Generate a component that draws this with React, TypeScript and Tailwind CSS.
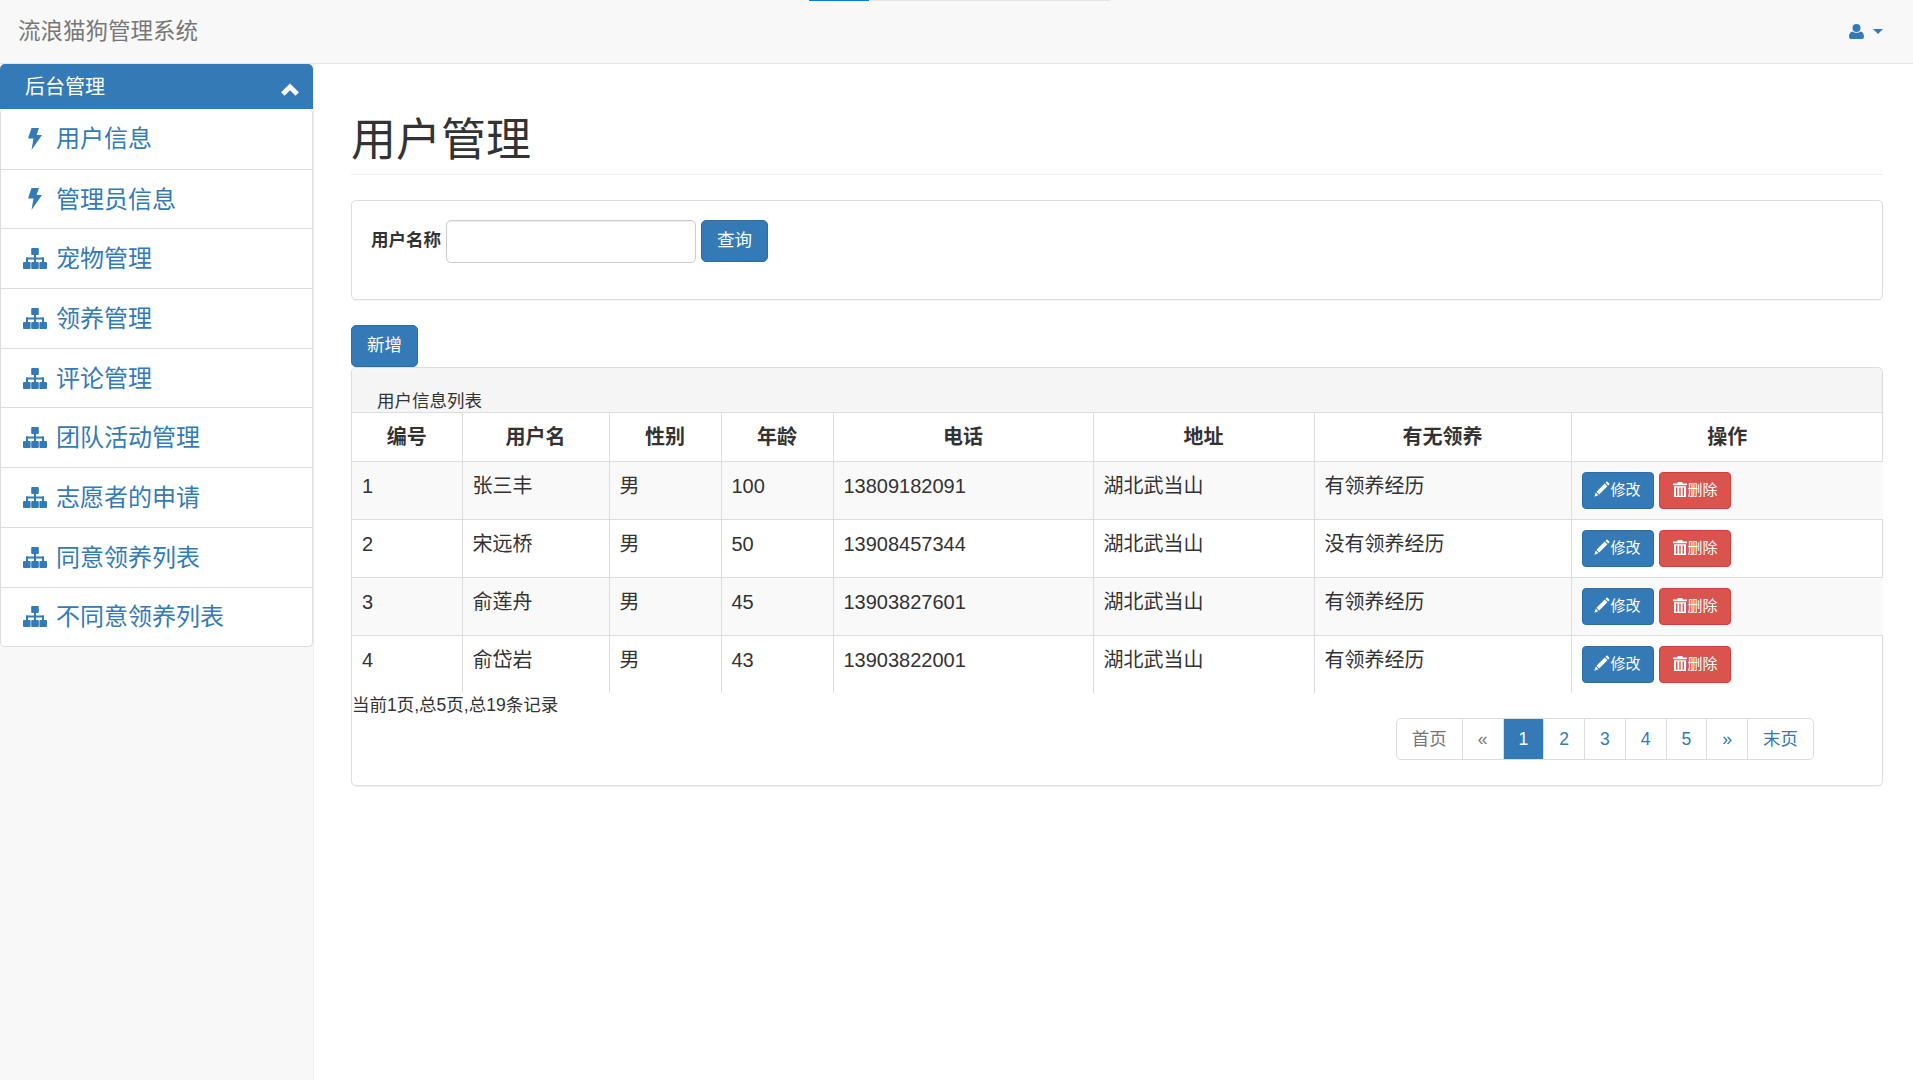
const menu = [
  { label: '用户信息', bolt: true },
  { label: '管理员信息', bolt: true },
  { label: '宠物管理' },
  { label: '领养管理' },
  { label: '评论管理' },
  { label: '团队活动管理' },
  { label: '志愿者的申请' },
  { label: '同意领养列表' },
  { label: '不同意领养列表' },
];

const rows = [
  ['1', '张三丰', '男', '100', '13809182091', '湖北武当山', '有领养经历'],
  ['2', '宋远桥', '男', '50', '13908457344', '湖北武当山', '没有领养经历'],
  ['3', '俞莲舟', '男', '45', '13903827601', '湖北武当山', '有领养经历'],
  ['4', '俞岱岩', '男', '43', '13903822001', '湖北武当山', '有领养经历'],
];

const headers = ['编号', '用户名', '性别', '年龄', '电话', '地址', '有无领养', '操作'];
const colWidths = [110, 147, 112, 112, 260, 221, 257, 312];
const pages = ['首页', '«', '1', '2', '3', '4', '5', '»', '末页'];

function BoltIcon() {
  return (
    <svg width="14" height="22" viewBox="0 0 14 22" fill="currentColor">
      <path d="M3.500 0H11L8.500 7H14L3.500 22L5.500 10.500H0Z" />
    </svg>
  );
}

function SitemapIcon() {
  return (
    <svg width="24" height="21" viewBox="0 0 24 21" fill="currentColor">
      <rect x="8.200" y="0" width="7.600" height="7" rx="1" />
      <rect x="11" y="6" width="2" height="8" />
      <rect x="3" y="9.500" width="18" height="2" rx="0.500" />
      <rect x="3" y="9.500" width="2" height="5" />
      <rect x="19" y="9.500" width="2" height="5" />
      <rect x="0" y="14" width="7.600" height="7" rx="1" />
      <rect x="8.200" y="14" width="7.600" height="7" rx="1" />
      <rect x="16.400" y="14" width="7.600" height="7" rx="1" />
    </svg>
  );
}

function ChevronUpIcon() {
  return (
    <svg width="18" height="13" viewBox="0 0 18 13" fill="none" stroke="currentColor" strokeWidth="4.800">
      <path d="M1.800 11L9 3.800L16.200 11" />
    </svg>
  );
}

function UserIcon() {
  return (
    <svg width="15" height="15" viewBox="0 0 15 15" fill="currentColor">
      <circle cx="7.500" cy="4" r="4" />
      <path d="M0 12.800C0 9.500 1.500 8 3.600 7.600C5 9.300 10 9.300 11.400 7.600C13.500 8 15 9.500 15 12.800C15 14.200 14 15 12.800 15H2.200C1 15 0 14.200 0 12.800Z" />
    </svg>
  );
}

function PencilIcon() {
  return (
    <svg width="16" height="16" viewBox="0 0 16 16" fill="currentColor" className="mb-[2px] shrink-0">
      <path d="M13 0.300 15.700 3 14.200 4.500 11.500 1.800ZM10.700 2.600 13.400 5.300 5.200 13.500 2.500 10.800ZM1.800 11.600 4.400 14.200 0.300 15.700Z" />
    </svg>
  );
}

function TrashIcon() {
  return (
    <svg width="14" height="15" viewBox="0 0 14 15" fill="currentColor" className="mb-[2px] ml-[2px] shrink-0">
      <path fillRule="evenodd" d="M4.500 0h5v1.500H14v1.800H0V1.500H4.500ZM1 4.200h12V15H1ZM3 5.500V13.800H4.400V5.500ZM6.300 5.500V13.800H7.700V5.500ZM9.600 5.500V13.800H11V5.500Z" />
    </svg>
  );
}

export default function App() {
  return (
    <div className="min-h-[1080px] bg-white text-[17.5px] leading-[25px] text-[#333] font-['Liberation_Sans','Noto_Sans_CJK_SC',sans-serif]">
      {/* Top nav */}
      <div className="relative flex h-[64px] items-center justify-between border-b border-[#e7e7e7] bg-[#f8f8f8] pl-[18px] pr-[30px]">
        <div className="absolute left-[809px] top-0 flex h-px w-[301px] bg-[#e5e5e5]">
          <div className="h-px w-[60px] bg-[#007ee5]" />
        </div>
        <span className="text-[22.5px] text-[#777]">流浪猫狗管理系统</span>
        <div className="flex items-center gap-[9px] text-[#337ab7]">
          <UserIcon />
          <span className="h-0 w-0 border-x-[5px] border-t-[5px] border-x-transparent border-t-[#337ab7]" />
        </div>
      </div>

      <div className="flex min-h-[1016px]">
        {/* Sidebar */}
        <div className="w-[314px] shrink-0 border-r border-[#eee] bg-[#f8f8f8]">
          <div className="flex h-[45px] items-center justify-between rounded-t-[5px] bg-[#337ab7] pl-[25px] pr-[14px] text-[20px] text-white">
            <span className="mt-[1px]">后台管理</span>
            <span className="mt-[6px]"><ChevronUpIcon /></span>
          </div>
          <div className="rounded-[5px] border border-[#ddd] border-t-0 bg-white">
            {menu.map((item, i) => (
              <div
                key={item.label}
                className={`flex h-[59.7px] items-center gap-[9px] pl-[22px] text-[24px] text-[#337ab7] ${i > 0 ? 'border-t border-[#ddd]' : ''}`}
              >
                <span className="flex w-[24px] justify-center">
                  {item.bolt ? <BoltIcon /> : <SitemapIcon />}
                </span>
                <span>{item.label}</span>
              </div>
            ))}
          </div>
        </div>

        {/* Main */}
        <div className="min-w-0 flex-1 pl-[37px] pr-[30px]">
          <div className="mt-[50px] border-b border-[#eee] pb-[6px]">
            <h1 className="text-[45px] leading-[54px] font-normal">用户管理</h1>
          </div>

          <div className="mt-[25px] h-[100px] rounded-[5px] border border-[#ddd] pl-[19px] pt-[19px] shadow-[0_1px_1px_rgba(0,0,0,0.05)]">
            <div className="flex items-start">
              <label className="mr-[5px] mt-[8px] font-bold">用户名称</label>
              <input className="h-[42.5px] w-[250px] rounded-[5px] border border-[#ccc] shadow-[inset_0_1px_1px_rgba(0,0,0,0.075)]" />
              <button className="ml-[5px] h-[42px] w-[67px] rounded-[5px] border border-[#2e6da4] bg-[#337ab7] pb-[2px] text-white">查询</button>
            </div>
          </div>

          <button className="mt-[25px] block h-[42px] w-[67px] rounded-[5px] border border-[#2e6da4] bg-[#337ab7] pb-[2px] text-white">新增</button>

          <div className="h-[419px] rounded-[5px] border border-[#ddd] shadow-[0_1px_1px_rgba(0,0,0,0.05)]">
            <div className="h-[45px] rounded-t-[5px] border-b border-[#ddd] bg-[#f5f5f5] pl-[25px] pt-[21px]">用户信息列表</div>
            <table className="w-full table-fixed border-collapse text-[20px] leading-[28px]">
              <colgroup>
                {colWidths.map((w, i) => (
                  <col key={i} style={{ width: w }} />
                ))}
              </colgroup>
              <thead>
                <tr className="h-[48px] border-b border-[#ddd]">
                  {headers.map((h, i) => (
                    <th key={h} className={`pt-[1px] text-center font-bold ${i > 0 ? 'border-l border-[#ddd]' : ''}`}>{h}</th>
                  ))}
                </tr>
              </thead>
              <tbody>
                {rows.map((row, r) => (
                  <tr key={row[0]} className={`h-[58px] ${r < 3 ? 'border-b border-[#ddd]' : ''} ${r % 2 === 0 ? 'bg-[#f9f9f9]' : ''}`}>
                    {row.map((cell, i) => (
                      <td key={i} className={`px-[10px] pb-[8px] align-middle ${i > 0 ? 'border-l border-[#ddd]' : ''}`}>{cell}</td>
                    ))}
                    <td className="border-l border-[#ddd] px-[10px] align-middle">
                      <div className="flex gap-[5px]">
                        <button className="flex h-[37px] w-[72px] items-center justify-center rounded-[4px] border border-[#2e6da4] bg-[#337ab7] text-[15px] text-white">
                          <PencilIcon />修改
                        </button>
                        <button className="flex h-[37px] w-[72px] items-center justify-center rounded-[4px] border border-[#d43f3a] bg-[#d9534f] text-[15px] text-white">
                          <TrashIcon />删除
                        </button>
                      </div>
                    </td>
                  </tr>
                ))}
              </tbody>
            </table>
            <div>当前1页,总5页,总19条记录</div>
            <div className="mr-[68px] flex justify-end">
              <div className="flex h-[42px] overflow-hidden rounded-[5px] border border-[#ddd] bg-white">
                {pages.map((p, i) => (
                  <span
                    key={p}
                    className={`flex items-center justify-center px-[15px] ${i > 0 ? 'border-l border-[#ddd]' : ''} ${p === '1' ? 'bg-[#337ab7] text-white' : i < 2 ? 'text-[#777]' : 'text-[#337ab7]'}`}
                  >
                    {p}
                  </span>
                ))}
              </div>
            </div>
          </div>
        </div>
      </div>
    </div>
  );
}
